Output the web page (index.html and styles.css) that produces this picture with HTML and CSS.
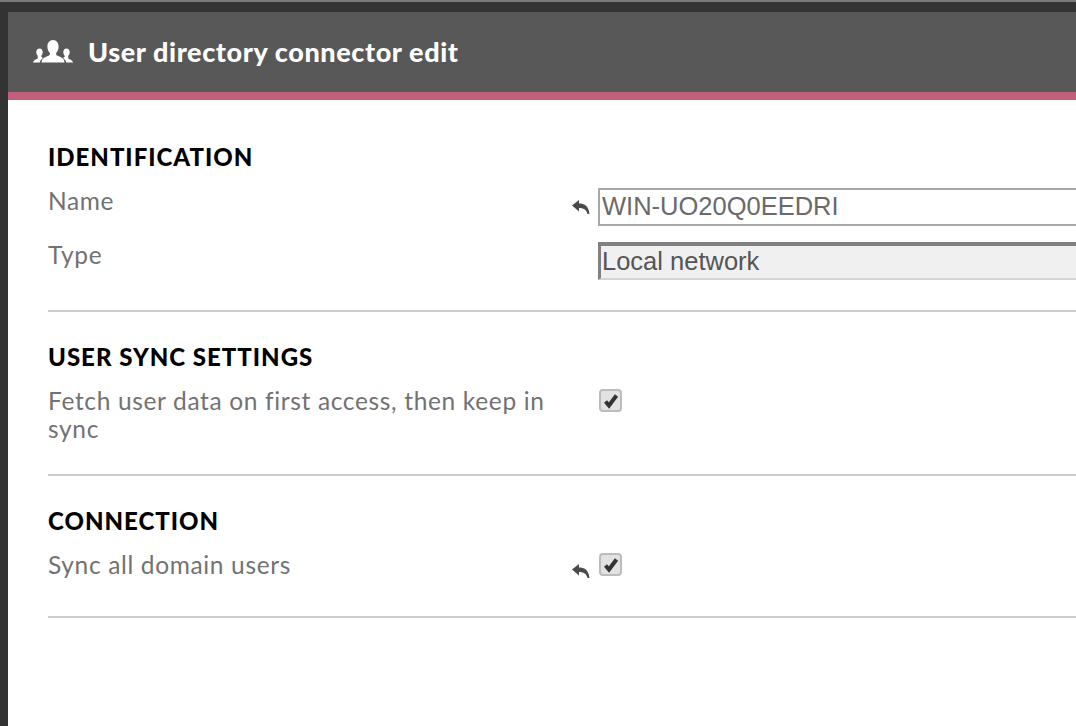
FILE: index.html
```html
<!DOCTYPE html>
<html lang="en">
<head>
  <meta charset="UTF-8">
  <meta name="viewport" content="width=device-width, initial-scale=1.0">
  <link rel="stylesheet" href="styles.css">
  <title>User directory connector edit</title>
</head>
<body>
  <div class="panel">
    <div class="header">
      <svg class="users-icon" width="42" height="26" viewBox="0 0 42 26">
        <path fill="#fff" d="M21 1c3.600 0 5.600 3 5.600 6.500 0 2.800-1 5-2.400 6.300v2.200c1.500.8 4.600 2 6.300 3.300 1.200 1 1.800 2.400 2 4.200H9.500c.2-1.800.8-3.200 2-4.200 1.700-1.300 4.800-2.500 6.300-3.300v-2.200c-1.400-1.300-2.400-3.500-2.400-6.300C15.400 4 17.400 1 21 1z"/>
        <path fill="#fff" d="M7.500 9.500c2 0 3.200 1.700 3.200 3.700 0 1.500-.6 2.800-1.400 3.500v1.100L11 19c-1.700 1.100-2.900 2.500-3.200 4.500H1c.1-.9.500-1.600 1.200-2.100.9-.7 2.500-1.400 3.500-1.900v-2.800c-.8-.7-1.400-2-1.400-3.500 0-2 1.200-3.700 3.200-3.700z"/>
        <path fill="#fff" d="M34.500 9.500c-2 0-3.200 1.700-3.200 3.700 0 1.500.6 2.800 1.400 3.500v1.100L31 19c1.700 1.100 2.900 2.500 3.200 4.500H41c-.1-.9-.5-1.600-1.200-2.100-.9-.7-2.500-1.400-3.500-1.900v-2.800c.8-.7 1.400-2 1.400-3.500 0-2-1.200-3.700-3.200-3.700z"/>
      </svg>
      <h1 class="title">User directory connector edit</h1>
    </div>

    <div class="form">
      <div class="section section-identification">
        <h2 class="section-title">IDENTIFICATION</h2>
        <div class="row">
          <div class="label">Name</div>
          <div class="reset">
            <svg width="18" height="16" viewBox="0 0 18 16"><path fill="#4a4a4a" d="M0 6.500 7 1v3.600c5 0 9.500 1.800 10.500 10.400h-2C14.600 10.500 11 9 7 9v3.500z"/></svg>
          </div>
          <input class="text-input" type="text" value="WIN-UO20Q0EEDRI">
        </div>
        <div class="row">
          <div class="label">Type</div>
          <div class="reset"></div>
          <input class="text-input disabled" type="text" value="Local network" disabled>
        </div>
      </div>

      <div class="section section-sync">
        <h2 class="section-title">USER SYNC SETTINGS</h2>
        <div class="row">
          <div class="label">Fetch user data on first access, then keep in sync</div>
          <div class="reset"></div>
          <div class="checkbox">
            <svg width="16" height="16" viewBox="0 0 16 16"><path fill="none" stroke="#333333" stroke-width="4" d="M2.500 8.500 6 12.500 13.500 2.500"/></svg>
          </div>
        </div>
      </div>

      <div class="section section-connection">
        <h2 class="section-title">CONNECTION</h2>
        <div class="row">
          <div class="label">Sync all domain users</div>
          <div class="reset">
            <svg width="18" height="16" viewBox="0 0 18 16"><path fill="#4a4a4a" d="M0 6.500 7 1v3.600c5 0 9.500 1.800 10.500 10.400h-2C14.600 10.500 11 9 7 9v3.500z"/></svg>
          </div>
          <div class="checkbox">
            <svg width="16" height="16" viewBox="0 0 16 16"><path fill="none" stroke="#333333" stroke-width="4" d="M2.500 8.500 6 12.500 13.500 2.500"/></svg>
          </div>
        </div>
      </div>
    </div>
  </div>
</body>
</html>
```

FILE: styles.css
```css
html, body {
  height: 100%;
}

body {
  margin: 0;
  overflow: hidden;
  background-color: #333333;
  border-top: 2px solid #7a7a7a;
  box-sizing: border-box;
  padding: 10px 0 0 8px;
  font-family: "Lato", "Liberation Sans", sans-serif;
}

.panel {
  height: 100%;
  background-color: #ffffff;
  overflow: hidden;
}

.header {
  display: flex;
  align-items: center;
  height: 80px;
  padding-left: 24px;
  background-color: #585858;
  border-bottom: 8px solid #c0607a;
}

.users-icon {
  margin-right: 14px;
}

.title {
  margin: 0 0 2px;
  color: #ffffff;
  font-size: 27px;
  font-weight: 900;
  letter-spacing: 0.6px;
}

.form {
  padding-left: 40px;
}

.section {
  width: 1100px;
  box-sizing: border-box;
  border-bottom: 2px solid #cccccc;
}

.section-identification {
  height: 212px;
  padding-top: 44px;
}

.section-sync {
  height: 164px;
  padding-top: 32px;
}

.section-connection {
  height: 142px;
  padding-top: 32px;
}

.section-title {
  margin: 0 0 17px;
  height: 26px;
  line-height: 26px;
  color: #000000;
  font-size: 24px;
  font-weight: 900;
  letter-spacing: 1px;
}

.row {
  display: flex;
  align-items: flex-start;
  margin-bottom: 15px;
}

.label {
  width: 522px;
  flex: none;
  color: #727272;
  font-size: 24.500px;
  letter-spacing: 0.65px;
  line-height: 28px;
}

.reset {
  width: 26px;
  flex: none;
  padding: 12px 0 0 2px;
}

.text-input {
  width: 500px;
  height: 38px;
  flex: none;
  box-sizing: border-box;
  margin: 1px 0 0;
  padding: 0 2px 2px;
  border: 2px solid #a8a8a8;
  background-color: #ffffff;
  color: #6a6a6a;
  font-family: "Liberation Sans", sans-serif;
  font-size: 25.500px;
}

.text-input.disabled {
  padding-left: 1px;
  background-color: #f0f0f0;
  border-color: #d4d4d4;
  border-top: 4px solid #808080;
  border-left: 3px solid #808080;
  color: #555555;
}

.checkbox {
  display: flex;
  align-items: center;
  justify-content: center;
  width: 23px;
  height: 23px;
  box-sizing: border-box;
  margin: 2px 0 0 1px;
  border: 2px solid #bcbcbc;
  border-radius: 4px;
  background-color: #e2e2e2;
}
```
